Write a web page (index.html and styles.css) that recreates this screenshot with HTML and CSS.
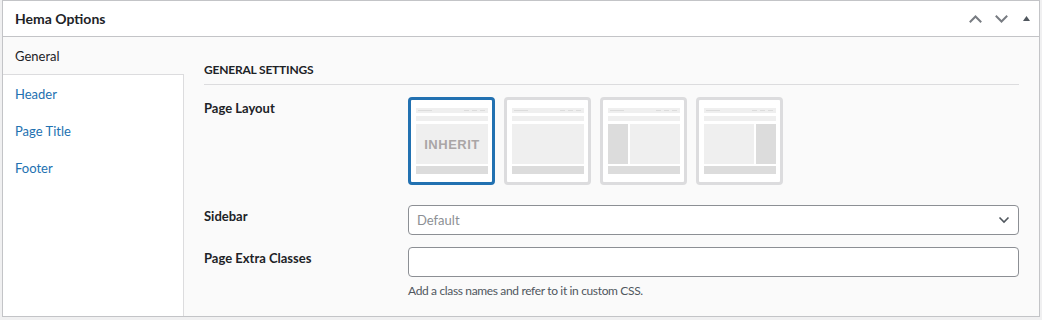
FILE: index.html
```html
<!DOCTYPE html>
<html lang="en">
<head>
  <meta charset="UTF-8">
  <title>Hema Options</title>
  <link rel="stylesheet" href="styles.css">
</head>
<body>
  <div class="postbox">
    <div class="postbox-header">
      <h2>Hema Options</h2>
      <div class="handle-actions">
        <button class="handle up" aria-label="Move up">
          <svg width="13" height="8" viewBox="0 0 13 8"><path d="M0.8 7.2 L6.5 1.5 L12.2 7.2" fill="none" stroke="#787c82" stroke-width="2"/></svg>
        </button>
        <button class="handle down" aria-label="Move down">
          <svg width="13" height="8" viewBox="0 0 13 8"><path d="M0.8 0.8 L6.5 6.5 L12.2 0.8" fill="none" stroke="#787c82" stroke-width="2"/></svg>
        </button>
        <button class="handle toggle" aria-label="Toggle panel">
          <svg width="7" height="5" viewBox="0 0 7 5"><path d="M3.5 0 L7 5 L0 5 Z" fill="#50575e"/></svg>
        </button>
      </div>
    </div>

    <div class="inside">
      <ul class="tabs">
        <li class="active"><a href="#">General</a></li>
        <li><a href="#">Header</a></li>
        <li><a href="#">Page Title</a></li>
        <li><a href="#">Footer</a></li>
      </ul>

      <div class="panel">
        <h3 class="section-title">General Settings</h3>

        <div class="field">
          <label class="field-label">Page Layout</label>
          <div class="layouts">
            <div class="thumb selected">
              <div class="bar top"><span class="dash logo"></span><span class="menu"><span class="dash"></span><span class="dash"></span><span class="dash"></span></span></div>
              <div class="bar"></div>
              <div class="body"><div class="main inherit">INHERIT</div></div>
              <div class="foot"></div>
            </div>
            <div class="thumb">
              <div class="bar top"><span class="dash logo"></span><span class="menu"><span class="dash"></span><span class="dash"></span><span class="dash"></span></span></div>
              <div class="bar"></div>
              <div class="body"><div class="main"></div></div>
              <div class="foot"></div>
            </div>
            <div class="thumb">
              <div class="bar top"><span class="dash logo"></span><span class="menu"><span class="dash"></span><span class="dash"></span><span class="dash"></span></span></div>
              <div class="bar"></div>
              <div class="body"><div class="side"></div><div class="main"></div></div>
              <div class="foot"></div>
            </div>
            <div class="thumb">
              <div class="bar top"><span class="dash logo"></span><span class="menu"><span class="dash"></span><span class="dash"></span><span class="dash"></span></span></div>
              <div class="bar"></div>
              <div class="body"><div class="main"></div><div class="side"></div></div>
              <div class="foot"></div>
            </div>
          </div>
        </div>

        <div class="field">
          <label class="field-label" for="sidebar">Sidebar</label>
          <div class="select">
            <span>Default</span>
            <svg width="12" height="8" viewBox="0 0 12 8"><path d="M1.5 1.5 L6 6 L10.5 1.5" fill="none" stroke="#50575e" stroke-width="1.6"/></svg>
          </div>
        </div>

        <div class="field">
          <label class="field-label" for="extra">Page Extra Classes</label>
          <div>
            <input type="text" id="extra" class="text-input">
            <p class="description">Add a class names and refer to it in custom CSS.</p>
          </div>
        </div>
      </div>
    </div>
  </div>
</body>
</html>
```

FILE: styles.css
```css
body {
  margin: 0;
  background: #f0f0f1;
  font-family: Lato, "Noto Sans", sans-serif;
  font-size: 13px;
  color: #1d2327;
}

.postbox {
  margin-left: 2px;
  width: 1038px;
  box-sizing: border-box;
  height: 317px;
  border: 1px solid #c3c4c7;
  background: #fff;
  display: flex;
  flex-direction: column;
}

.postbox-header {
  display: flex;
  justify-content: space-between;
  align-items: center;
  height: 35px;
  border-bottom: 1px solid #c3c4c7;
}

.postbox-header h2 {
  margin: 0;
  padding: 0 12px;
  font-size: 14px;
  font-weight: 700;
}

.handle-actions {
  display: flex;
  align-items: center;
  padding-right: 0;
}

.handle {
  background: none;
  border: none;
  padding: 0;
  display: flex;
  align-items: center;
  justify-content: center;
  width: 26px;
  height: 20px;
  cursor: pointer;
}

.handle.up, .handle.down { padding-left: 3px; }

.inside {
  flex: 1;
  display: flex;
}

.tabs {
  list-style: none;
  margin: 0;
  padding: 0;
  width: 180px;
  border-right: 1px solid #dcdcde;
  background: #fff;
}

.tabs li a {
  display: block;
  padding: 11px 12px 9px;
  line-height: 17px;
  color: #2271b1;
  text-decoration: none;
}

.tabs li.active {
  background: #fafafa;
  border-bottom: 1px solid #dcdcde;
  margin-right: -1px;
}

.tabs li.active a {
  color: #1d2327;
}

.panel {
  flex: 1;
  background: #fafafa;
  padding: 24px 20px 0 20px;
}

.section-title {
  margin: 0 0 12px;
  padding-bottom: 5px;
  border-bottom: 1px solid #dcdcde;
  font-size: 12px;
  font-weight: 700;
  letter-spacing: -0.2px;
  line-height: 18px;
  text-transform: uppercase;
}

.field {
  display: grid;
  grid-template-columns: 204px 1fr;
  margin-bottom: 12px;
}

.field-label {
  font-weight: 700;
  line-height: 18px;
  padding-top: 2px;
}

.layouts {
  display: flex;
  gap: 9px;
  margin-bottom: 8px;
}

.thumb {
  width: 87px;
  height: 88px;
  box-sizing: border-box;
  border: 3px solid #dcdcde;
  border-radius: 4px;
  background: #fff;
  padding: 8px 4px 0 5px;
  display: flex;
  flex-direction: column;
  gap: 3px;
}

.thumb.selected {
  border-color: #2271b1;
}

.thumb .bar {
  height: 5px;
  background: #efefef;
}

.thumb .bar.top {
  display: flex;
  align-items: center;
  justify-content: space-between;
  padding: 0 3px 0 2px;
}

.thumb .dash {
  display: block;
  width: 5px;
  height: 1px;
  background: #dcdcdc;
}

.thumb .dash.logo { width: 14px; }

.thumb .menu {
  display: flex;
  gap: 3px;
}

.thumb .body {
  height: 40px;
  display: flex;
  gap: 2px;
}

.thumb .main {
  flex: 1;
  background: #efefef;
}

.thumb .side {
  width: 20px;
  background: #dcdcdc;
}

.thumb .inherit {
  display: flex;
  align-items: center;
  justify-content: center;
  font-family: "Liberation Sans", Arial, sans-serif;
  font-size: 13px;
  font-weight: bold;
  letter-spacing: 0.5px;
  color: #aaa6a6;
}

.thumb .foot {
  height: 8px;
  margin-top: -1px;
  background: #dcdcdc;
}

.select {
  height: 30px;
  box-sizing: border-box;
  border: 1px solid #8c8f94;
  border-radius: 4px;
  background: #fff;
  display: flex;
  align-items: center;
  justify-content: space-between;
  padding: 0 8px 0 8px;
  color: #8c8f94;
}

.text-input {
  display: block;
  width: 100%;
  height: 30px;
  box-sizing: border-box;
  margin: 0;
  border: 1px solid #8c8f94;
  border-radius: 4px;
  background: #fff;
}

.description {
  margin: 5px 0 0;
  line-height: 17px;
  font-size: 12px;
  letter-spacing: -0.35px;
  color: #50575e;
}
```
